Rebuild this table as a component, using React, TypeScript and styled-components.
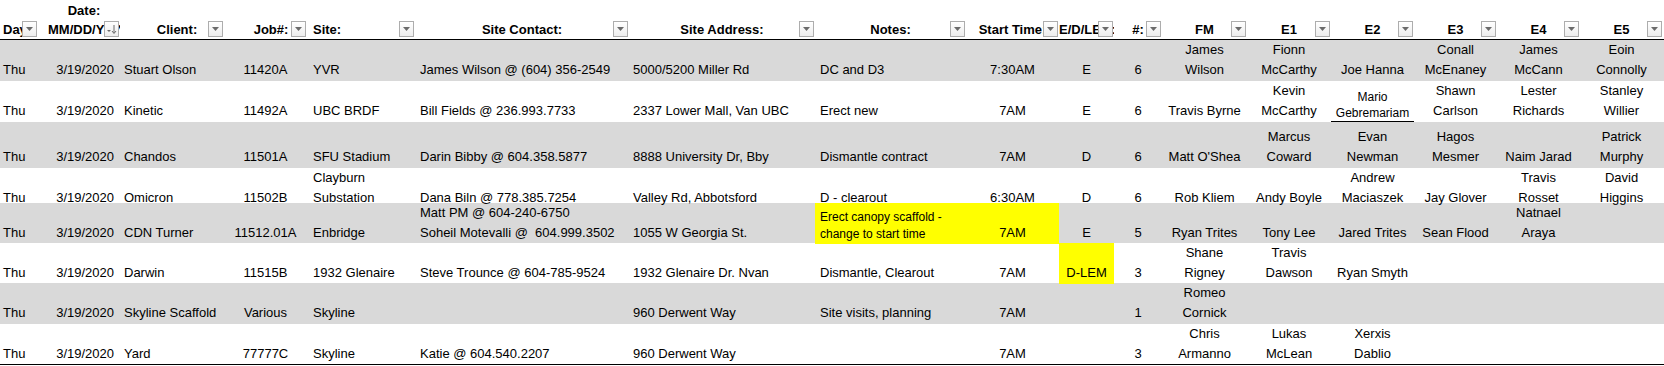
import styled, { createGlobalStyle } from "styled-components";

type Align = "left" | "center" | "right";

const GlobalStyle = createGlobalStyle`
  body {
    margin: 0;
    background: #fff;
    font-family: "Liberation Sans", Arial, sans-serif;
    color: #000;
  }
`;

const Sheet = styled.div`
  width: 1664px;
  font-size: 13px;
`;

const HeaderRow = styled.div<{ $cols: string }>`
  display: grid;
  grid-template-columns: ${(p) => p.$cols};
  height: 39px;
  border-bottom: 1px solid #000;
`;

const HeadCell = styled.div`
  position: relative;
  display: flex;
  flex-direction: column;
  justify-content: flex-end;
  overflow: hidden;
`;

const HeadText = styled.div<{ $align: Align; $pad: number }>`
  font-weight: bold;
  white-space: nowrap;
  line-height: 19px;
  text-align: ${(p) => p.$align};
  padding-left: ${(p) => p.$pad}px;
`;

const FilterButton = styled.span`
  position: absolute;
  right: 1px;
  bottom: 2px;
  width: 15px;
  height: 16px;
  box-sizing: border-box;
  border: 1px solid #adadad;
  background: linear-gradient(#ffffff, #ededed);
  display: flex;
  align-items: center;
  justify-content: center;
`;

const DataRow = styled.div<{ $cols: string; $height: number; $shade: boolean }>`
  display: grid;
  grid-template-columns: ${(p) => p.$cols};
  height: ${(p) => p.$height}px;
  background: ${(p) => (p.$shade ? "#d9d9d9" : "#fff")};

  &:last-child {
    border-bottom: 1px solid #000;
  }
`;

const DataCell = styled.div<{
  $align: Align;
  $pad: number;
  $fill?: string;
  $small?: boolean;
  $lh: number;
  $underline?: boolean;
}>`
  display: flex;
  flex-direction: column;
  justify-content: flex-end;
  white-space: pre;
  text-align: ${(p) => p.$align};
  padding: 0 ${(p) => p.$pad}px 1px;
  font-size: ${(p) => (p.$small ? 12 : 13)}px;
  line-height: ${(p) => p.$lh}px;
  background: ${(p) => p.$fill || "transparent"};
  box-shadow: ${(p) => (p.$underline ? "inset 0 -1px 0 #000" : "none")};
`;

interface Column {
  label: string;
  width: number;
  align: Align;
  pad?: number;
  headAlign?: Align;
  headPad?: number;
  top?: string;
  sorted?: boolean;
}

interface CellSpec {
  text: string;
  small?: boolean;
  lh?: number;
  fill?: string;
  underline?: boolean;
}

type CellValue = string | CellSpec;

const columns: Column[] = [
  { label: "Day", width: 38, align: "left", pad: 3, headAlign: "left", headPad: 3 },
  { label: "MM/DD/YYYY", top: "Date:", width: 82, align: "right", pad: 6, headAlign: "left", headPad: 10, sorted: true },
  { label: "Client:", width: 104, align: "left", pad: 4, headPad: 10 },
  { label: "Job#:", width: 83, align: "center", headPad: 11 },
  { label: "Site:", width: 108, align: "left", pad: 6, headAlign: "left", headPad: 6 },
  { label: "Site Contact:", width: 214, align: "left", pad: 5 },
  { label: "Site Address:", width: 186, align: "left", pad: 4 },
  { label: "Notes:", width: 151, align: "left", pad: 5 },
  { label: "Start Time:", width: 93, align: "center" },
  { label: "E/D/LEM:", width: 55, align: "center" },
  { label: "#:", width: 48, align: "center" },
  { label: "FM", width: 85, align: "center" },
  { label: "E1", width: 84, align: "center" },
  { label: "E2", width: 83, align: "center" },
  { label: "E3", width: 83, align: "center" },
  { label: "E4", width: 83, align: "center" },
  { label: "E5", width: 83, align: "center" },
];

const yellow = "#ffff00";

const rows: { height: number; cells: CellValue[] }[] = [
  {
    height: 41,
    cells: ["Thu", "3/19/2020", "Stuart Olson", "11420A", "YVR", "James Wilson @ (604) 356-2549", "5000/5200 Miller Rd", "DC and D3", "7:30AM", "E", "6", "James\nWilson", "Fionn\nMcCarthy", "Joe Hanna", "Conall\nMcEnaney", "James\nMcCann", "Eoin\nConnolly"],
  },
  {
    height: 41,
    cells: ["Thu", "3/19/2020", "Kinetic", "11492A", "UBC BRDF", "Bill Fields @ 236.993.7733", "2337 Lower Mall, Van UBC", "Erect new", "7AM", "E", "6", "Travis Byrne", "Kevin\nMcCarthy", { text: "Mario\nGebremariam", small: true, lh: 16, underline: true }, "Shawn\nCarlson", "Lester\nRichards", "Stanley\nWillier"],
  },
  {
    height: 46,
    cells: ["Thu", "3/19/2020", "Chandos", "11501A", "SFU Stadium", "Darin Bibby @ 604.358.5877", "8888 University Dr, Bby", "Dismantle contract", "7AM", "D", "6", "Matt O'Shea", "Marcus\nCoward", "Evan\nNewman", "Hagos\nMesmer", "Naim Jarad", "Patrick\nMurphy"],
  },
  {
    height: 35,
    cells: ["Thu", "3/19/2020", "Omicron", "11502B", "Clayburn\nSubstation", "Dana Biln @ 778.385.7254", "Valley Rd, Abbotsford", "D - clearout", "6:30AM", "D", "6", "Rob Kliem", "Andy Boyle", "Andrew\nMaciaszek", "Jay Glover", "Travis\nRosset", "David\nHiggins"],
  },
  {
    height: 40,
    cells: ["Thu", "3/19/2020", "CDN Turner", "11512.01A", "Enbridge", "Matt PM @ 604-240-6750\nSoheil Motevalli @  604.999.3502", "1055 W Georgia St.", { text: "Erect canopy scaffold -\nchange to start time", small: true, lh: 17, fill: yellow }, { text: "7AM", fill: yellow }, "E", "5", "Ryan Trites", "Tony Lee", "Jared Trites", "Sean Flood", "Natnael\nAraya", ""],
  },
  {
    height: 40,
    cells: ["Thu", "3/19/2020", "Darwin", "11515B", "1932 Glenaire", "Steve Trounce @ 604-785-9524", "1932 Glenaire Dr. Nvan", "Dismantle, Clearout", "7AM", { text: "D-LEM", fill: yellow }, "3", "Shane\nRigney", "Travis\nDawson", "Ryan Smyth", "", "", ""],
  },
  {
    height: 41,
    cells: ["Thu", "3/19/2020", "Skyline Scaffold", "Various", "Skyline", "", "960 Derwent Way", "Site visits, planning", "7AM", "", "1", "Romeo\nCornick", "", "", "", "", ""],
  },
  {
    height: 40,
    cells: ["Thu", "3/19/2020", "Yard", "77777C", "Skyline", "Katie @ 604.540.2207", "960 Derwent Way", "", "7AM", "", "3", "Chris\nArmanno", "Lukas\nMcLean", "Xerxis\nDablio", "", ""],
  },
];

const template = columns.map((c) => `${c.width}px`).join(" ");

const FilterArrow = () => (
  <svg width="7" height="4" viewBox="0 0 7 4">
    <polygon points="0,0 7,0 3.5,4" fill="#6a6a6a" />
  </svg>
);

const SortedArrow = () => (
  <svg width="11" height="12" viewBox="0 0 11 12">
    <polygon points="1,7 5,7 3,9" fill="#6a6a6a" />
    <line x1="8" y1="2" x2="8" y2="10" stroke="#6a6a6a" strokeWidth="1" />
    <polyline points="6,8 8,10.5 10,8" fill="none" stroke="#6a6a6a" strokeWidth="1" />
  </svg>
);

const App = () => {
  return (
    <Sheet>
      <GlobalStyle />
      <HeaderRow $cols={template}>
        {columns.map((c) => (
          <HeadCell key={c.label}>
            {c.top && (
              <HeadText $align="center" $pad={c.headPad || 0}>
                {c.top}
              </HeadText>
            )}
            <HeadText $align={c.headAlign || "center"} $pad={c.headPad || 0}>
              {c.label}
            </HeadText>
            <FilterButton>{c.sorted ? <SortedArrow /> : <FilterArrow />}</FilterButton>
          </HeadCell>
        ))}
      </HeaderRow>
      {rows.map((r, ri) => (
        <DataRow key={ri} $cols={template} $height={r.height} $shade={ri % 2 === 0}>
          {r.cells.map((v, ci) => {
            const spec: CellSpec = typeof v === "string" ? { text: v } : v;
            const col = columns[ci];
            return (
              <DataCell
                key={ci}
                $align={col.align}
                $pad={col.pad || 0}
                $fill={spec.fill}
                $small={spec.small}
                $lh={spec.lh || 20}
                $underline={spec.underline}
              >
                {spec.text}
              </DataCell>
            );
          })}
        </DataRow>
      ))}
    </Sheet>
  );
};

export default App;
